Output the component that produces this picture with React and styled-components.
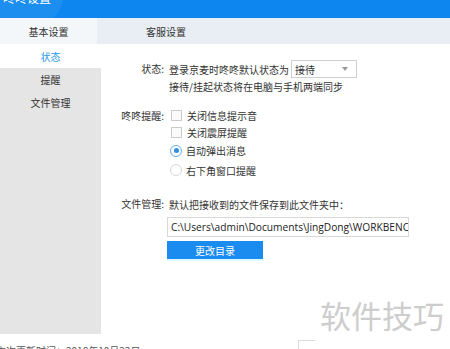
import React from "react";
import styled, { createGlobalStyle } from "styled-components";

const GlobalStyle = createGlobalStyle`
  html, body {
    margin: 0;
    padding: 0;
    background: #ffffff;
    overflow: hidden;
  }
  body {
    font-family: "Noto Sans CJK SC", "Noto Sans", sans-serif;
    color: #333333;
  }
`;

const Page = styled.div`
  position: relative;
  width: 450px;
  height: 349px;
  overflow: hidden;
  background: #ffffff;
`;

const TitleBar = styled.div`
  position: relative;
  height: 18px;
  background: #0d87ef;
  overflow: hidden;

  /* faint round decoration behind the title */
  &::before {
    content: "";
    position: absolute;
    left: -30px;
    top: -60px;
    width: 95px;
    height: 95px;
    border-radius: 50%;
    background: rgba(255, 255, 255, 0.06);
  }
`;

const Title = styled.div`
  position: relative;
  margin-top: -10px;
  padding-left: 3px;
  font-size: 12px;
  line-height: 16px;
  color: #ffffff;
`;

const Tabs = styled.div`
  display: flex;
  height: 26px;
  background: #e8eef3;
`;

const Tab = styled.div`
  width: ${(p) => (p.$active ? "97px" : "138px")};
  display: flex;
  align-items: center;
  justify-content: center;
  font-size: 10px;
  color: #333;
  background: ${(p) => (p.$active ? "#f4f7fa" : "transparent")};
`;

const Body = styled.div`
  display: flex;
  height: 290px;
`;

const Sidebar = styled.div`
  width: 101px;
  display: flex;
  flex-direction: column;
  background: #e5e5e5;
`;

const NavItem = styled.div`
  height: ${(p) => (p.$active ? "24px" : "23px")};
  display: flex;
  align-items: center;
  justify-content: center;
  font-size: 10px;
  color: ${(p) => (p.$active ? "#2b9be6" : "#333")};
  background: ${(p) => (p.$active ? "#ffffff" : "transparent")};
`;

const Content = styled.div`
  flex: 1;
  padding-top: 16px;
  font-size: 10px;
`;

const Row = styled.div`
  display: grid;
  grid-template-columns: 63px 1fr;
  column-gap: 5px;
  margin-top: ${(p) => p.$mt || 0}px;
`;

const Label = styled.div`
  height: ${(p) => p.$h || 18}px;
  line-height: ${(p) => p.$h || 18}px;
  text-align: right;
  color: #333;
`;

const Value = styled.div`
  display: flex;
  flex-direction: column;
`;

const Line = styled.div`
  display: flex;
  align-items: center;
  height: ${(p) => p.$h || 18}px;
  white-space: nowrap;
`;

const Select = styled.div`
  margin-left: 2px;
  box-sizing: border-box;
  width: 66px;
  height: 18px;
  border: 1px solid #cfcfcf;
  display: flex;
  align-items: center;
  justify-content: space-between;
  padding: 0 8px 0 3px;
  font-size: 10px;
`;

const Caret = styled.span`
  width: 0;
  height: 0;
  border-left: 3px solid transparent;
  border-right: 3px solid transparent;
  border-top: 4px solid #999;
`;

const Box = styled.span`
  width: 9px;
  height: 9px;
  border: 1px solid #cccccc;
  background: #fafafa;
  margin: 0 5px 0 2px;
  flex: none;
`;

const Radio = styled.span`
  position: relative;
  width: 10px;
  height: 10px;
  border-radius: 50%;
  border: 1px solid ${(p) => (p.$on ? "#68aee8" : "#d8d8d8")};
  background: #fff;
  margin: 0 4px 0 1px;
  flex: none;

  &::after {
    content: "";
    display: ${(p) => (p.$on ? "block" : "none")};
    position: absolute;
    left: 2.5px;
    top: 2.5px;
    width: 5px;
    height: 5px;
    border-radius: 50%;
    background: #2f8fe0;
  }
`;

const PathField = styled.div`
  margin-top: 4px;
  margin-left: -2px;
  width: 242px;
  height: 20px;
  border: 1px solid #d8d8d8;
  box-sizing: border-box;
  padding-left: 3px;
  overflow: hidden;
  white-space: nowrap;
  font-family: "Open Sans", "Noto Sans", sans-serif;
  font-size: 10.2px;
  line-height: 18px;
  color: #222;
`;

const Button = styled.div`
  margin-top: 4px;
  margin-left: -2px;
  width: 96px;
  height: 18px;
  background: #1a8cf0;
  color: #fff;
  font-size: 10px;
  display: flex;
  align-items: center;
  justify-content: center;
  box-shadow: 0 2px 0 rgba(120, 230, 255, 0.25);
`;

const Footer = styled.div`
  padding-top: 9px;
  margin-left: -4px;
  font-size: 10px;
  color: #555;
  white-space: nowrap;
`;

const Watermark = styled.div`
  position: absolute;
  left: 320px;
  top: 297px;
  font-size: 31px;
  line-height: 36px;
  color: #cdcdcd;
`;

const Corner = styled.div`
  position: absolute;
  left: 298px;
  top: 340px;
  width: 16px;
  height: 12px;
  border-top: 1px solid #dcdcdc;
  border-left: 1px solid #dcdcdc;
`;

export default function App() {
  return (
    <Page>
      <GlobalStyle />
      <TitleBar>
        <Title>咚咚设置</Title>
      </TitleBar>
      <Tabs>
        <Tab $active>基本设置</Tab>
        <Tab>客服设置</Tab>
      </Tabs>
      <Body>
        <Sidebar>
          <NavItem $active>状态</NavItem>
          <NavItem>提醒</NavItem>
          <NavItem>文件管理</NavItem>
        </Sidebar>
        <Content>
          <Row>
            <Label>状态:</Label>
            <Value>
              <Line>
                登录京麦时咚咚默认状态为
                <Select>
                  接待
                  <Caret />
                </Select>
              </Line>
              <Line $h={17}>接待/挂起状态将在电脑与手机两端同步</Line>
            </Value>
          </Row>
          <Row $mt={12}>
            <Label $h={17}>咚咚提醒:</Label>
            <Value>
              <Line $h={17}>
                <Box />
                关闭信息提示音
              </Line>
              <Line $h={17}>
                <Box />
                关闭震屏提醒
              </Line>
              <Line $h={19}>
                <Radio $on />
                自动弹出消息
              </Line>
              <Line $h={20}>
                <Radio />
                右下角窗口提醒
              </Line>
            </Value>
          </Row>
          <Row $mt={15}>
            <Label>文件管理:</Label>
            <Value>
              <Line>默认把接收到的文件保存到此文件夹中：</Line>
              <PathField>C:\Users\admin\Documents\JingDong\WORKBENCH</PathField>
              <Button>更改目录</Button>
            </Value>
          </Row>
        </Content>
      </Body>
      <Footer>本次更新时间：2018年10月23日</Footer>
      <Watermark>软件技巧</Watermark>
      <Corner />
    </Page>
  );
}
